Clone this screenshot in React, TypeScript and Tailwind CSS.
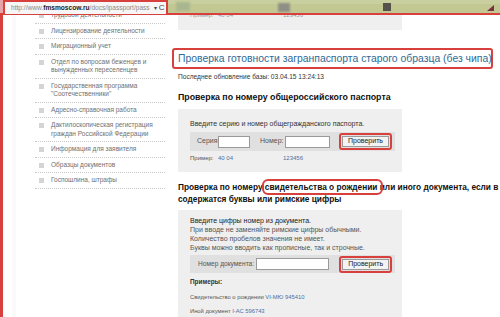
import React from "react";

function SideItem({ lines, first }: { lines: string[]; first?: boolean }) {
  return (
    <div
      className={`flex items-start border-b border-dotted border-[#c9c9c9] pt-[3px] pb-[3px] ${first ? "mt-[-7px]" : ""}`}
    >
      <div className="w-[5px] h-[5px] bg-[#d4d4d4] ml-[4px] mr-[7px] mt-[2px] shrink-0" />
      <div className="text-[6.5px] leading-[8.5px] text-[#707070]">
        {lines.map((l, i) => (
          <div key={i}>{l}</div>
        ))}
      </div>
    </div>
  );
}

function Btn() {
  return (
    <div className="rounded-[3px] border-2 border-[#d8403e] p-[1px]">
      <div className="px-[5px] h-[11px] flex items-center bg-[#f3f3f3] border border-[#9a9a9a] text-[7px] text-[#222] whitespace-nowrap">
        Проверить
      </div>
    </div>
  );
}

export default function App() {
  return (
    <div
      className="w-[500px] h-[317px] overflow-hidden bg-white relative"
      style={{ fontFamily: '"Liberation Sans", Arial, sans-serif' }}
    >
      {/* top bar */}
      <div className="flex h-[13px]">
        <div className="w-[3px] bg-[#e6a3a8]" />
        <div className="w-[165px] h-[14px] border-2 border-b-0 border-[#d8403e] bg-[#f6f6f6] flex items-center pl-[6px] pr-[2px] text-[6.6px] text-[#8a8a8a] whitespace-nowrap overflow-hidden">
          <span>http://www.</span>
          <span className="text-[#222] font-bold">fmsmoscow.ru</span>
          <span>/docs/ipassport/pass</span>
          <svg width="8" height="8" viewBox="0 0 10 10" className="ml-[2px]">
            <circle cx="6" cy="4" r="2.8" fill="none" stroke="#333" strokeWidth="1.2" />
            <path d="M4 6 L1 9" stroke="#333" strokeWidth="1.4" />
          </svg>
          <span className="text-[#444] text-[6px] ml-[2px]">▾</span>
          <span className="text-[#444] text-[8px] ml-[2px]">C</span>
        </div>
        <div className="flex-1 h-[13px] bg-[#c3c893] flex items-center relative overflow-hidden">
          <div className="absolute left-0 right-0 top-0 h-[4px] bg-[#c9cf9e]" />
          <div className="absolute left-[8px] top-[2px] w-[14px] h-[9px] bg-[#aab78e] blur-[1px]" />
          <div className="absolute left-[110px] top-[3px] w-[12px] h-[9px] bg-[#8f8f85] blur-[1px]" />
          <div className="absolute left-[215px] top-[3px] w-[8px] h-[8px] bg-[#55524b] blur-[0.5px]" />
          <div className="absolute left-[319px] top-[5px] w-[7px] h-[6px] bg-[#7a3040]" style={{ clipPath: "polygon(100% 0,100% 100%,0 100%)" }} />
        </div>
      </div>

      {/* framed page */}
      <div className="flex h-[304px] border-t-2 border-l-[3px] border-[#d8403e] overflow-hidden">
        {/* sidebar */}
        <div className="w-[165px] shrink-0 pl-[32px] pr-[3px] overflow-hidden relative">
          <div className="absolute left-[9px] top-0 bottom-0 w-[4px] bg-[#fafafa]" />
          <SideItem first lines={["трудовой деятельности"]} />
          <SideItem lines={["Лицензирование деятельности"]} />
          <SideItem lines={["Миграционный учет"]} />
          <SideItem lines={["Отдел по вопросам беженцев и", "вынужденных переселенцев"]} />
          <SideItem lines={["Государственная программа", "\"Соотечественники\""]} />
          <SideItem lines={["Адресно-справочная работа"]} />
          <SideItem lines={["Дактилоскопическая регистрация", "граждан Российской Федерации"]} />
          <SideItem lines={["Информация для заявителя"]} />
          <SideItem lines={["Образцы документов"]} />
          <SideItem lines={["Госпошлина, штрафы"]} />
        </div>

        {/* main */}
        <div className="flex-1 flex flex-col pl-[10px] overflow-hidden">
          <div className="w-[224px] h-[15px] bg-[#efefef] overflow-hidden pl-[12px] flex items-start">
            <div className="flex text-[6px] text-[#999] mt-[-4px]">
              <span className="w-[28px]">Пример:</span>
              <span className="w-[65px]">40 04</span>
              <span>123456</span>
            </div>
          </div>

          <div className="ml-[-6px] mt-[18px] w-[321px] h-[21px] rounded-[3px] border-2 border-[#d8403e] flex items-center pl-[4px]">
            <span className="text-[10.4px] text-[#2f6b96] whitespace-nowrap">
              Проверка готовности загранпаспорта старого образца (без чипа)
            </span>
          </div>

          <div className="mt-[3px] text-[6.6px] leading-[9px] text-[#333]">
            Последнее обновление базы: 03.04.15 13:24:13
          </div>

          <div className="mt-[11px] text-[8.8px] leading-[11px] font-bold text-[#111] whitespace-nowrap">
            Проверка по номеру общероссийского паспорта
          </div>

          <div className="mt-[6px] w-[224px] h-[63px] bg-[#efefef] pl-[12px] pr-[7px] pt-[10px]">
            <div className="text-[7px] leading-[9px] text-[#333]">
              Введите серию и номер общегражданского паспорта.
            </div>
            <div className="mt-[4px] h-[19px] bg-[#e0e0e0] flex items-center text-[7px] text-[#555]">
              <span className="ml-[7px] w-[21px]">Серия:</span>
              <div className="w-[32px] h-[12px] bg-white border border-[#9a9a9a]" />
              <span className="ml-[10px] w-[25px]">Номер:</span>
              <div className="w-[45px] h-[12px] bg-white border border-[#9a9a9a]" />
              <div className="ml-[9px]">
                <Btn />
              </div>
            </div>
            <div className="mt-[3px] flex text-[6px] leading-[9px]">
              <span className="w-[28px] text-[#555]">Пример:</span>
              <span className="w-[65px] text-[#4a6fa5]">40 04</span>
              <span className="text-[#4a6fa5]">123456</span>
            </div>
          </div>

          <div className="mt-[9px] text-[8.3px] leading-[12px] font-bold text-[#111] whitespace-nowrap">
            <div>
              Проверка по номеру{" "}
              <span className="rounded-[3px] outline-2 outline-solid outline-[#d8403e] outline-offset-[1px]">
                свидетельства о рождении{" "}
              </span>
              или иного документа, если в
            </div>
            <div>содержатся буквы или римские цифры</div>
          </div>

          <div className="mt-[5px] w-[224px] flex-1 bg-[#efefef] pl-[12px] pr-[7px] pt-[6px]">
            <div className="text-[7px] leading-[9px] text-[#555]">
              <div className="text-[#222]">Введите цифры номер из документа.</div>
              <div>При вводе не заменяйте римские цифры обычными.</div>
              <div>Количество пробелов значения не имеет.</div>
              <div>Буквы можно вводить как прописные, так и строчные.</div>
            </div>
            <div className="mt-[3px] h-[18px] bg-[#e0e0e0] flex items-center text-[6.6px] text-[#555]">
              <span className="ml-[8px] mr-[2px] whitespace-nowrap">Номер документа:</span>
              <div className="w-[73px] h-[12px] bg-white border border-[#9a9a9a]" />
              <div className="ml-[10px]">
                <Btn />
              </div>
            </div>
            <div className="mt-[4px] text-[6.4px] leading-[9px] font-bold text-[#333]">Примеры:</div>
            <div className="mt-[7px] text-[5.8px] leading-[8px] text-[#555]">
              Свидетельство о рождении <span className="text-[#4a6fa5]">VI-МЮ 945410</span>
            </div>
            <div className="mt-[6px] text-[5.8px] leading-[8px] text-[#555]">
              Иной документ <span className="text-[#4a6fa5]">I-АС 596743</span>
            </div>
          </div>
        </div>
      </div>
    </div>
  );
}
